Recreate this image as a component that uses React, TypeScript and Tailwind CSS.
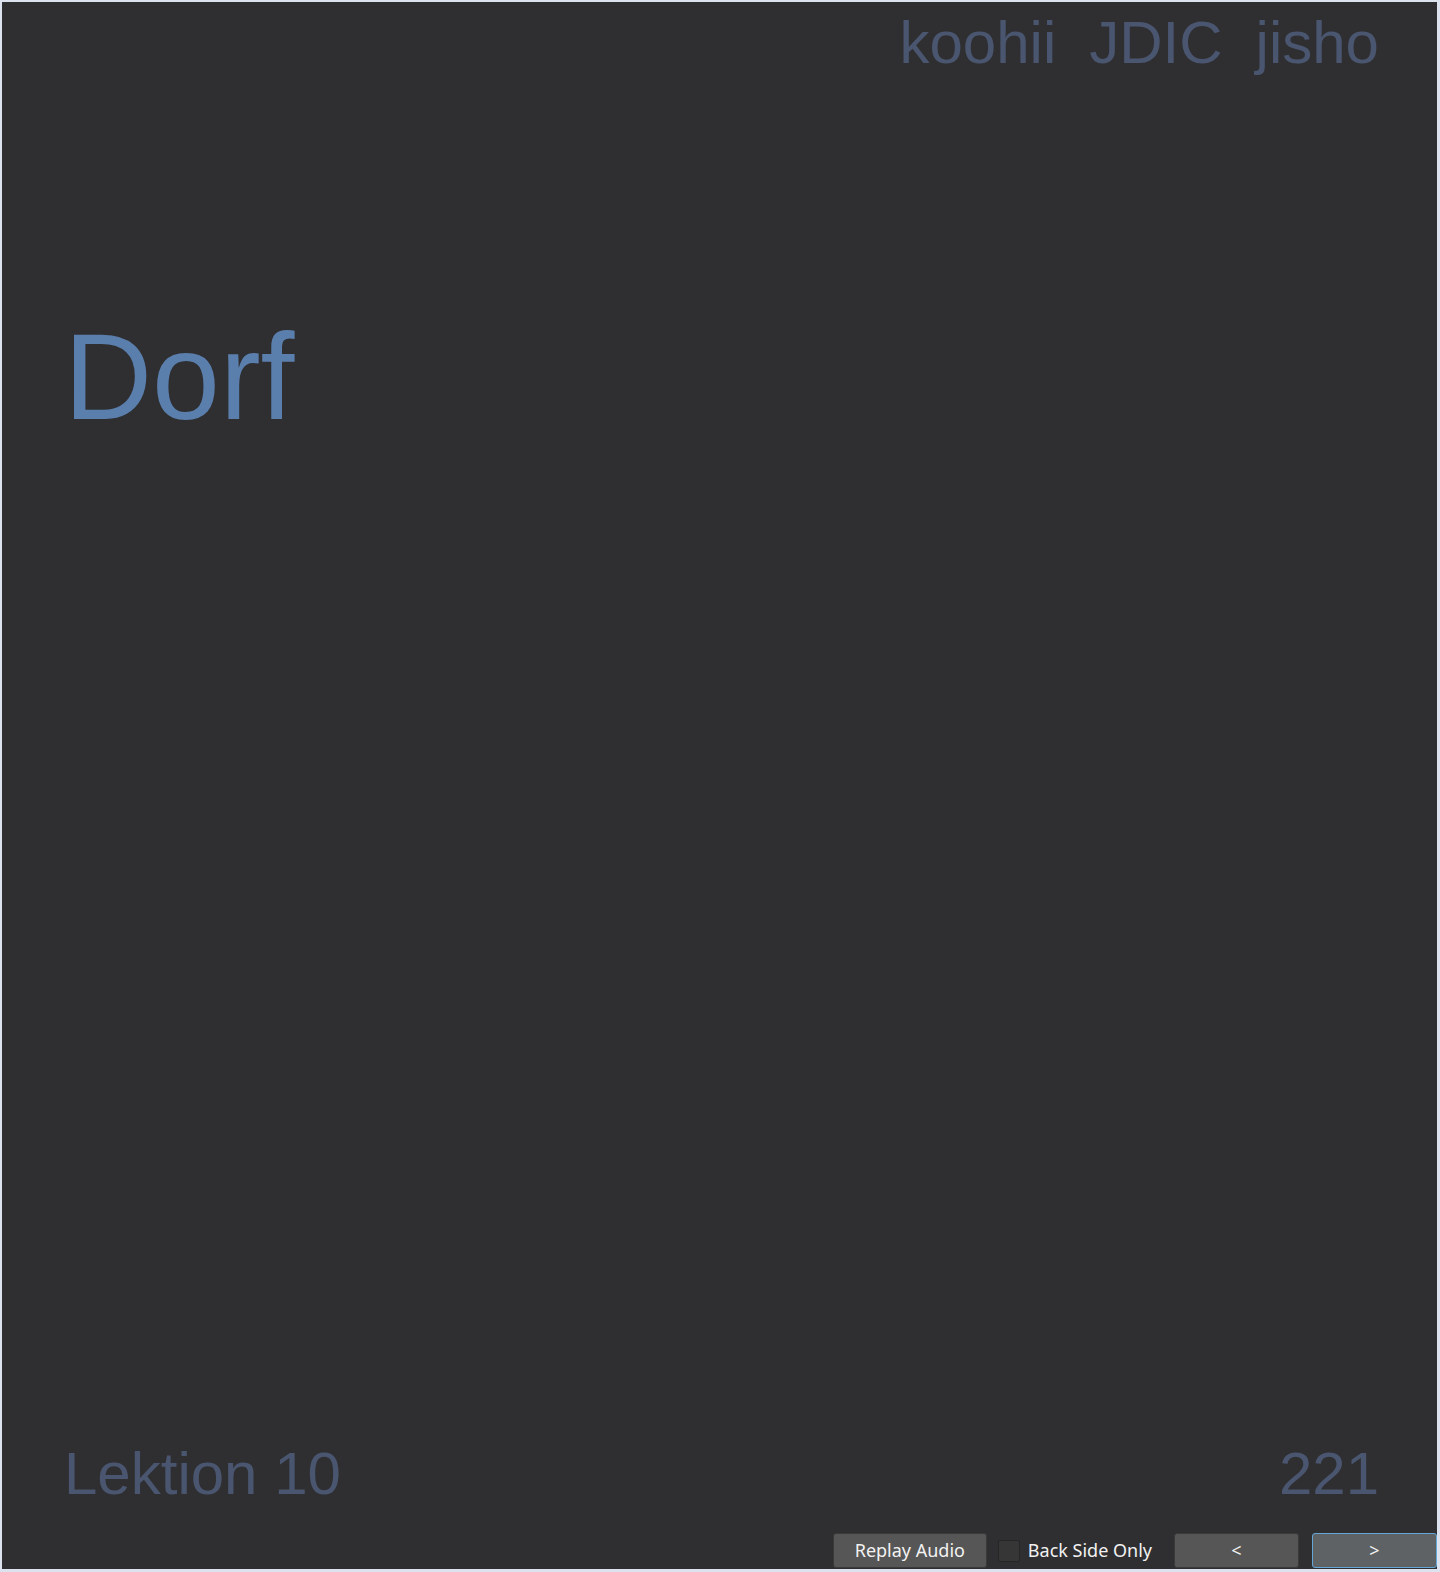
import React from "react";

export default function App() {
  const arial = { fontFamily: '"Liberation Sans", Arial, sans-serif' };
  const ui = { fontFamily: '"Noto Sans", "Open Sans", sans-serif' };
  return (
    <div className="w-[1440px] h-[1572px] bg-[#dde3ee] pl-[2px] pt-[2px] pr-[3px] pb-[3px]">
      <div className="w-full h-full bg-[#2f2f31] flex flex-col">
        <div className="mt-[11px] flex justify-end gap-[33px] pr-[58px] text-[60px] leading-none text-[#4a5670]" style={arial}>
          <span>koohii</span>
          <span>JDIC</span>
          <span>jisho</span>
        </div>
        <div className="mt-[243px] pl-[62px] text-[122px] leading-none text-[#5b7fad]" style={arial}>
          Dorf
        </div>
        <div className="flex-1" />
        <div className="flex justify-between pl-[62px] pr-[58px] text-[60px] leading-none text-[#4a5670]" style={arial}>
          <span>Lektion 10</span>
          <span>221</span>
        </div>
        <div className="mt-[29px] mb-[1px] flex items-center justify-end text-[18px] text-[#f2f2f2]" style={ui}>
          <button className="w-[154px] h-[35px] rounded-[3px] border border-[#3a3a3a] bg-[#565656] flex items-center justify-center">
            Replay Audio
          </button>
          <div className="ml-[11px] w-[22px] h-[22px] rounded-[2px] border border-[#262626] bg-[#363636]" />
          <span className="ml-[8px]">Back Side Only</span>
          <button className="ml-[22px] w-[125px] h-[35px] rounded-[3px] border border-[#3a3a3a] bg-[#565656] flex items-center justify-center">
            &lt;
          </button>
          <button className="ml-[13px] w-[125px] h-[35px] rounded-[3px] border border-[#64a6d6] bg-[#5e6265] flex items-center justify-center">
            &gt;
          </button>
        </div>
      </div>
    </div>
  );
}
